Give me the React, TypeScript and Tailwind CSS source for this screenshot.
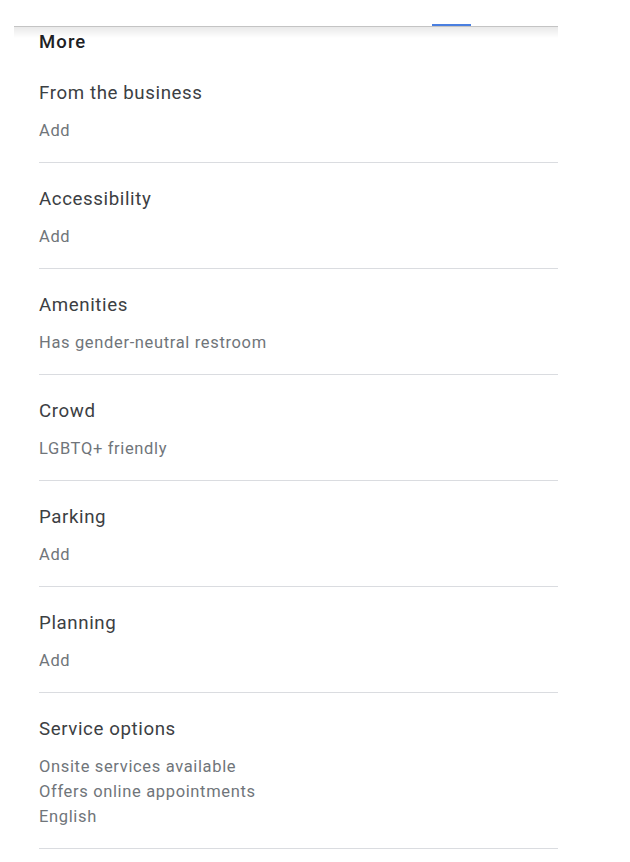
import React from 'react';

interface Attribute {
  title: string;
  values: string[];
}

const attributes: Attribute[] = [
  { title: 'From the business', values: ['Add'] },
  { title: 'Accessibility', values: ['Add'] },
  { title: 'Amenities', values: ['Has gender-neutral restroom'] },
  { title: 'Crowd', values: ['LGBTQ+ friendly'] },
  { title: 'Parking', values: ['Add'] },
  { title: 'Planning', values: ['Add'] },
  { title: 'Service options', values: ['Onsite services available', 'Offers online appointments', 'English'] },
];

const App: React.FC = () => {
  return (
    <div className="min-h-[862px] w-[630px] bg-white font-['Roboto',sans-serif]">
      {/* tab strip */}
      <div className="ml-[14px] flex h-[27px] w-[544px] items-end border-b border-[#c4c4c4]">
        <div className="ml-[418px] h-[2px] w-[39px] bg-[#4a7fe0]" />
      </div>

      <div className="ml-[14px] w-[544px] bg-[linear-gradient(to_bottom,#e9e9e9,#ffffff_11px)] pl-[25px]">
        <h2 className="pt-[3px] pb-[3px] text-[18.5px] font-medium leading-[24px] tracking-[1.1px] text-[#202124]">
          More
        </h2>

        {attributes.map((attr) => (
          <div key={attr.title} className="border-b border-[#dadce0] pt-[24px] pb-[19px]">
            <div className="text-[18.7px] leading-[24px] tracking-[0.6px] text-[#3c4043]">{attr.title}</div>
            <div className="mt-[13px] text-[16.5px] leading-[25px] tracking-[0.65px] text-[#70757a]">
              {attr.values.map((v) => (
                <div key={v}>{v}</div>
              ))}
            </div>
          </div>
        ))}
      </div>
    </div>
  );
};

export default App;
